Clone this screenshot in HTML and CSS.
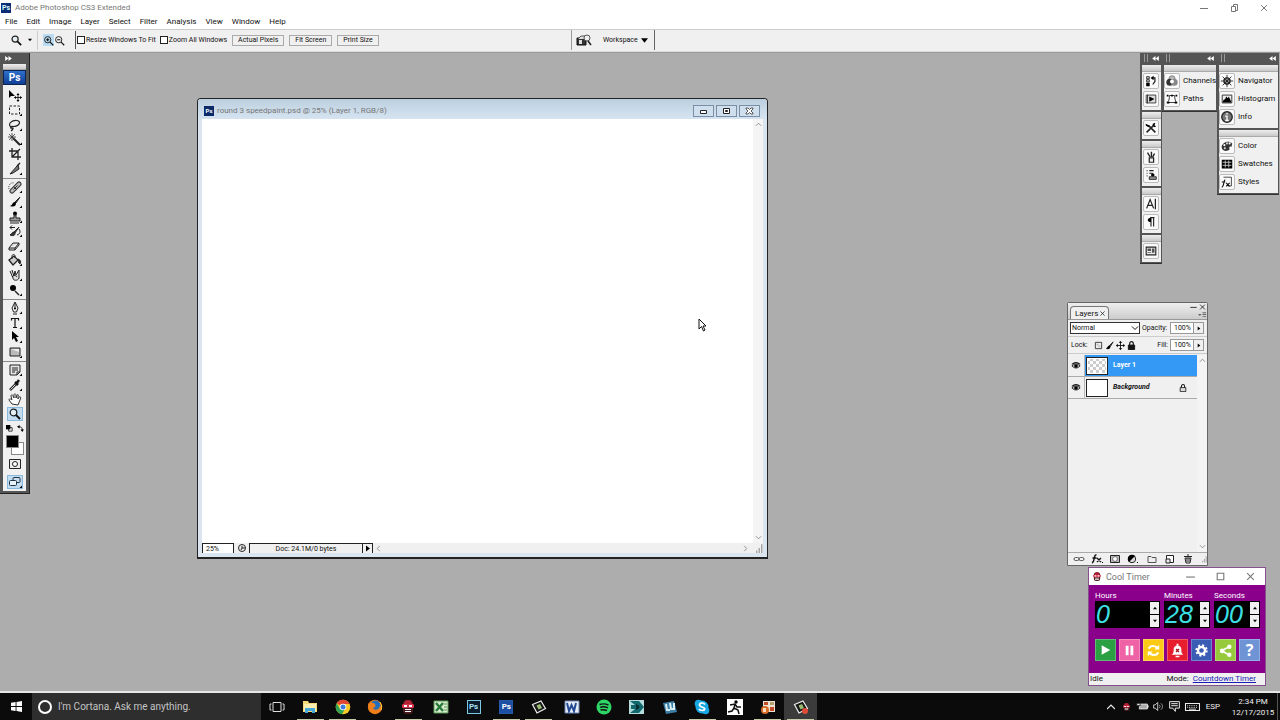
FILE: index.html
```html
<!DOCTYPE html>
<html lang="en">
<head>
<meta charset="utf-8">
<title>Adobe Photoshop CS3 Extended</title>
<link rel="stylesheet" href="styles.css">
</head>
<body>
<svg class="defs" aria-hidden="true">
  <symbol id="mag" viewBox="0 0 14 14"><circle cx="5.500" cy="5.500" r="3.300" fill="#e4eef5" stroke="#222" stroke-width="1.300"/><path d="M8 8l4 4" stroke="#111" stroke-width="2"/></symbol>
  <symbol id="magplus" viewBox="0 0 14 14"><circle cx="6" cy="6" r="4" fill="#b9dcf2" stroke="#222" stroke-width="1.200"/><path d="M6 4v4M4 6h4M9 9l4 4" stroke="#111" stroke-width="1.500"/></symbol>
  <symbol id="magminus" viewBox="0 0 14 14"><circle cx="6" cy="6" r="4" fill="#eee" stroke="#222" stroke-width="1.200"/><path d="M4 6h4M9 9l4 4" stroke="#111" stroke-width="1.500"/></symbol>
  <symbol id="tri" viewBox="0 0 6 6"><path d="M0 1h6L3 5z"/></symbol>
  <symbol id="triup" viewBox="0 0 6 6"><path d="M0 5h6L3 1z"/></symbol>
  <symbol id="triright" viewBox="0 0 6 6"><path d="M1 0v6l4-3z"/></symbol>
  <symbol id="chev" viewBox="0 0 8 8"><path d="M1 2.500l3 3 3-3" fill="none" stroke="currentColor"/></symbol>
  <symbol id="chevup" viewBox="0 0 8 8"><path d="M1 5.500l3-3 3 3" fill="none" stroke="currentColor"/></symbol>
  <symbol id="chevl" viewBox="0 0 8 8"><path d="M5.500 1l-3 3 3 3" fill="none" stroke="currentColor"/></symbol>
  <symbol id="chevr" viewBox="0 0 8 8"><path d="M2.500 1l3 3-3 3" fill="none" stroke="currentColor"/></symbol>
  <symbol id="collapse" viewBox="0 0 8 6"><path d="M4 0v6L0 3zM8 0v6L4 3z" fill="#fff"/></symbol>
  <symbol id="expand" viewBox="0 0 8 6"><path d="M0 0v6l4-3zM4 0v6l4-3z" fill="#fff"/></symbol>
  <symbol id="wmin" viewBox="0 0 10 10"><path d="M1 5.500h8" stroke="currentColor"/></symbol>
  <symbol id="wrest" viewBox="0 0 10 10"><path d="M2.500 3.500h4v5h-4zM4.500 3V1.500h4v6H7" fill="none" stroke="currentColor"/></symbol>
  <symbol id="wmax" viewBox="0 0 10 10"><path d="M2 2h6v6H2z" fill="none" stroke="currentColor"/></symbol>
  <symbol id="wx" viewBox="0 0 10 10"><path d="M2 2l6 6M8 2L2 8" stroke="currentColor" fill="none"/></symbol>
  <symbol id="corner" viewBox="0 0 16 14"><path d="M15 10.500V13h-2.500z"/></symbol>

  <symbol id="t-move" viewBox="0 0 16 14"><path d="M2 2v8l2-2 4 0z"/><path d="M11 6v7M7.500 9.500h7" stroke="#222"/><path d="M11 5l1.500 2h-3zM11 14l1.500-2h-3zM7 9.500l2-1.500v3zM15 9.500l-2-1.500v3z"/></symbol>
  <symbol id="t-marquee" viewBox="0 0 16 14"><rect x="2.500" y="3" width="10" height="8" fill="none" stroke="#222" stroke-dasharray="2.500 1.500"/><use href="#corner"/></symbol>
  <symbol id="t-lasso" viewBox="0 0 16 14"><path d="M4 9C0 6 5 2 10 2.500c5 1 2 6-4 6C3 8 3 11 5 10s1 2-1 3" fill="none" stroke="#222" stroke-width="1.200"/><use href="#corner"/></symbol>
  <symbol id="t-wand" viewBox="0 0 16 14"><path d="M6 6l7 7" stroke="#222" stroke-width="2"/><path d="M5 1v8M1 5h8M2 2l6 6M8 2L2 8" stroke="#333" stroke-width=".8"/><use href="#corner"/></symbol>
  <symbol id="t-crop" viewBox="0 0 16 14"><path d="M5 1v9h9M2 4h9v9M5 10l8-8" fill="none" stroke="#222" stroke-width="1.300"/></symbol>
  <symbol id="t-slice" viewBox="0 0 16 14"><path d="M3 12L11 3l1 4-6 4z" fill="#777" stroke="#222"/><path d="M10 4l3-3" stroke="#222" stroke-width="1.500"/><use href="#corner"/></symbol>
  <symbol id="t-heal" viewBox="0 0 16 14"><path d="M5 11L12 4" stroke="#333" stroke-width="5" stroke-linecap="round"/><path d="M5 11L12 4" stroke="#bbb" stroke-width="3" stroke-linecap="round"/><path d="M7 7l3 3M6.500 9.500l4-4" stroke="#333"/><path d="M2 9c-1-4 2-7 5-6" fill="none" stroke="#444" stroke-dasharray="1 1"/><use href="#corner"/></symbol>
  <symbol id="t-brush" viewBox="0 0 16 14"><path d="M13 2L8 7l1 1z" fill="#555" stroke="#222"/><path d="M8 7c-3 0-2 3-5 4 3 1 6 1 6-3z"/><use href="#corner"/></symbol>
  <symbol id="t-stamp" viewBox="0 0 16 14"><circle cx="8" cy="3.500" r="2"/><path d="M7 5h2v3h4v3H3V8h4z" fill="#999" stroke="#222"/><path d="M3 13h9" stroke="#222"/><use href="#corner"/></symbol>
  <symbol id="t-history" viewBox="0 0 16 14"><path d="M12 3L7 8l1 1z" fill="#555" stroke="#222"/><path d="M7 8c-2 0-2 2-4 3 3 1 5 1 5-2zM3 3.500h5M3 3.500l2-2M3 3.500l2 2" fill="#333" stroke="#222"/><path d="M12 5c2 3 1 5-2 6" fill="none" stroke="#222"/><use href="#corner"/></symbol>
  <symbol id="t-eraser" viewBox="0 0 16 14"><path d="M2 9l4-5h6L8 9zM2 9v2h6l4-5V4M8 9v2" fill="#ddd" stroke="#222"/><use href="#corner"/></symbol>
  <symbol id="t-bucket" viewBox="0 0 16 14"><path d="M2 7l5-4 4 4-5 5z" fill="#ccc" stroke="#222" stroke-width="1.300"/><path d="M5 6V3c0-2 3-2 3 0v2" fill="none" stroke="#222"/><path d="M11 6c3 1 3 3 2 5-2-1-1-3-2-5z" fill="#222" stroke="#222"/><use href="#corner"/></symbol>
  <symbol id="t-smudge" viewBox="0 0 16 14"><path d="M3 3l3 7c0 3 5 3 6 0V2L9 7 8 3 7 8 5 2" fill="#ddd" stroke="#222"/><path d="M5 9c2-2 4-2 5 0" fill="none" stroke="#222"/><use href="#corner"/></symbol>
  <symbol id="t-dodge" viewBox="0 0 16 14"><circle cx="6" cy="5" r="3"/><path d="M8 8l4 4" stroke="#222" stroke-width="1.500"/><use href="#corner"/></symbol>
  <symbol id="t-pen" viewBox="0 0 16 14"><path d="M8 1L5 7l1.500 4h3L11 7zM8 2v6M6 13h4" fill="#eee" stroke="#222"/><circle cx="8" cy="7.500" r="1"/><use href="#corner"/></symbol>
  <symbol id="t-type" viewBox="0 0 16 14"><path d="M4.500 4.500V2.500h7v2M8 2.500v9M6 11.500h4" fill="none" stroke="#111" stroke-width="1.200"/><use href="#corner"/></symbol>
  <symbol id="t-path" viewBox="0 0 16 14"><path d="M5 1v9l2-2 2 4 2-1-2-4h3z"/><use href="#corner"/></symbol>
  <symbol id="t-rect" viewBox="0 0 16 14"><path d="M3 3h10v8H3z" fill="#bbb" stroke="#222"/><path d="M4 4h8v3z" fill="#eee"/><use href="#corner"/></symbol>
  <symbol id="t-note" viewBox="0 0 16 14"><path d="M3 2h10v7l-3 3H3zM13 9h-3v3M5 5h6M5 7h6M5 9h3" fill="#e5e5e5" stroke="#222"/><use href="#corner"/></symbol>
  <symbol id="t-eye" viewBox="0 0 16 14"><path d="M3 12l6-6" stroke="#222" stroke-width="2.500"/><path d="M3.500 11.500l5-5" stroke="#ddd"/><path d="M8 4l3 3M9 6l3-4" stroke="#111" stroke-width="2.500"/><use href="#corner"/></symbol>
  <symbol id="t-hand" viewBox="0 0 16 14"><path d="M5 12L2 8c0-2 2-1 3 0L4 4c0-2 2-1 2 0l1 2V3c0-2 2-1 2 0v3l1-3c1-1 2 0 1 1v3l1-2c2-1 2 1 1 3l-2 5z" fill="#fff" stroke="#333"/></symbol>
  <symbol id="t-mask" viewBox="0 0 16 14"><path d="M2.500 2.500h11v9h-11z" fill="#eee" stroke="#222"/><circle cx="8" cy="7" r="2.500" fill="#fff" stroke="#222"/></symbol>
  <symbol id="t-screen" viewBox="0 0 16 14"><rect x="6" y="2.500" width="7" height="5" rx="1" fill="#c8ddef" stroke="#234"/><rect x="2.500" y="5.500" width="7" height="5" rx="1" fill="#e8f2fa" stroke="#234"/><use href="#corner"/></symbol>
  <symbol id="t-default" viewBox="0 0 8 8"><path d="M3 3h4v4H3z" fill="#fff" stroke="#222"/><path d="M0 0h5v5H0z"/></symbol>
  <symbol id="t-swap" viewBox="0 0 8 8"><path d="M2 2c3 0 4 1 4 4" fill="none" stroke="#111"/><path d="M0 2l3-2v4zM4 5h4L6 8z"/></symbol>

  <symbol id="p-history" viewBox="0 0 16 16"><path d="M3 3h3v2.500H3zM3 6.500h3v2.500H3z" fill="#ddd" stroke="#222"/><path d="M2.500 10h4v4h-4z"/><path d="M9 4.500h3.500v4L10 12" fill="none" stroke="#222" stroke-width="1.400"/><path d="M7.500 4.500L11 2v5z"/></symbol>
  <symbol id="p-play" viewBox="0 0 16 16"><path d="M2.500 3.500h11v9h-11zM4 3v10" fill="#ddd" stroke="#333"/><path d="M6 5v6l6-3z"/></symbol>
  <symbol id="p-tools" viewBox="0 0 16 16"><path d="M3 13L11 5M5 5l8 8" stroke="#222" stroke-width="1.800"/><path d="M2 3l4 2-1 2-3-2zM10 3l3-1-1 3 2 1-2 1-2-2z"/></symbol>
  <symbol id="p-brushes" viewBox="0 0 16 16"><path d="M6 9h5v5H6z" fill="#eee" stroke="#222" stroke-width="1.400"/><path d="M7 8L4 3M8.500 8V2M10 8l2-4" stroke="#222" stroke-width="1.600"/></symbol>
  <symbol id="p-clone" viewBox="0 0 16 16"><path d="M3 3h1M3 6h1M3 9h1M6 3h5M6 6h4" stroke="#222" stroke-width="1.400"/><circle cx="10" cy="8" r="2"/><path d="M6 10h8v3H6z" fill="#999" stroke="#222"/></symbol>
  <symbol id="p-char" viewBox="0 0 16 16"><path d="M3 13L7 3l4 10M4.500 9.500h5M13 2v12" fill="none" stroke="#222" stroke-width="1.400"/></symbol>
  <symbol id="p-para" viewBox="0 0 16 16"><path d="M8 3v10M11 3v10M12 3H7" fill="none" stroke="#222" stroke-width="1.300"/><path d="M8 3C3 3 3 8 8 8z"/></symbol>
  <symbol id="p-comps" viewBox="0 0 16 16"><path d="M2.500 3.500h11v9h-11z" fill="#eee" stroke="#222" stroke-width="1.300"/><path d="M4 5h4v3H4zM9 5h3v5H9zM4 9h4v1H4z" fill="#555"/></symbol>
  <symbol id="p-channels" viewBox="0 0 16 16"><circle cx="8" cy="5.500" r="3.500" fill="#bbb" stroke="#777"/><circle cx="5.500" cy="9.500" r="4" fill="#333"/><circle cx="10.500" cy="9.500" r="4" fill="#888"/><circle cx="8" cy="8.500" r="2.200" fill="#fff"/></symbol>
  <symbol id="p-paths" viewBox="0 0 16 16"><path d="M3 12C5 9 5 7 5 4h6c0 4 1 6 2 8z" fill="none" stroke="#222"/><path d="M2 3h2v2H2zM7 3h2v2H7zM12 3h2v2h-2zM2 11h3v2H2zM11 11h3v2h-3z"/></symbol>
  <symbol id="p-nav" viewBox="0 0 16 16"><circle cx="8" cy="8" r="3.500" fill="#ccc" stroke="#222" stroke-width="1.500"/><path d="M8 1v14M1 8h14M3 3l10 10M13 3L3 13" stroke="#222"/></symbol>
  <symbol id="p-hist" viewBox="0 0 16 16"><path d="M2.500 3.500h11v9h-11z" fill="#eee" stroke="#222"/><path d="M3 12l1-3 2-1 1-3 2 2 1-2 2 4 1 3z"/></symbol>
  <symbol id="p-info" viewBox="0 0 16 16"><circle cx="8" cy="8" r="6" fill="#777" stroke="#222" stroke-width="1.500"/><path d="M8 3v2M6 7h2v5M6 12h4" fill="none" stroke="#fff" stroke-width="1.500"/></symbol>
  <symbol id="p-color" viewBox="0 0 16 16"><path d="M13 9c-2-1-3 0-2 3-5 4-10 0-9-4s8-7 12-3z" fill="#333"/><circle cx="5" cy="7" r="1.200" fill="#fff"/><circle cx="8" cy="5" r="1.200" fill="#ccc"/><circle cx="5.500" cy="10.500" r="1.200" fill="#ddd"/><circle cx="11" cy="5" r="1.200" fill="#fff"/></symbol>
  <symbol id="p-swatch" viewBox="0 0 16 16"><path d="M2 3h12v10H2z"/><path d="M3 6h10M3 9.500h10M6 4v8M10 4v8" stroke="#ccc"/></symbol>
  <symbol id="p-styles" viewBox="0 0 16 16"><path d="M4 2.500h9v10H9" fill="none" stroke="#333"/><path d="M6 6C4 5 5 13 2 14M2 8h4M7 9l4 4M11 9l-4 4" fill="none" stroke="#111" stroke-width="1.300"/></symbol>

  <symbol id="eye" viewBox="0 0 12 12"><path d="M1 6q5-5 10 0-5 5-10 0z" fill="#ccc" stroke="#222"/><circle cx="6" cy="6" r="2.200"/><path d="M1 4q5-4 10 0" fill="none" stroke="#111" stroke-width="1.300"/></symbol>
  <symbol id="lock" viewBox="0 0 10 10"><path d="M3 5V3c0-3 4-3 4 0v2" fill="none" stroke="#111" stroke-width="1.300"/><path d="M1.500 4.500h7v5h-7z" fill="currentColor" stroke="#111"/></symbol>
  <symbol id="cross" viewBox="0 0 10 10"><path d="M5 1v8M1 5h8" stroke="#111"/><path d="M5 0l2 2H3zM5 10l2-2H3zM0 5l2-2v4zM10 5L8 3v4z"/></symbol>
  <symbol id="sq" viewBox="0 0 10 10"><path d="M1.500 1.500h7v7h-7z" fill="#eee" stroke="#333"/><path d="M3 3h2v2H3zM5 5h2v2H5z" fill="#bbb"/></symbol>
  <symbol id="l-link" viewBox="0 0 12 10"><rect x="1" y="3.500" width="5" height="3" rx="1.500" fill="none" stroke="#555"/><rect x="6" y="3.500" width="5" height="3" rx="1.500" fill="none" stroke="#555"/></symbol>
  <symbol id="l-fx" viewBox="0 0 12 10"><path d="M5.500 1C2.500 0 4 8 1 9M1.500 4h4M6 4l4 4M10 4L6 8" fill="none" stroke="#111" stroke-width="1.400"/><path d="M11 8h1v1h-1z"/></symbol>
  <symbol id="l-mask" viewBox="0 0 12 10"><path d="M1.500 1.500h9v7h-9z" fill="#bbb" stroke="#222"/><circle cx="6" cy="5" r="2.400" fill="#fff" stroke="#333" stroke-width=".6"/></symbol>
  <symbol id="l-adj" viewBox="0 0 12 10"><circle cx="5" cy="5" r="3.700" fill="#ddd" stroke="#222"/><path d="M2 8A4 4 0 018 2zM10 8h1v1h-1z"/></symbol>
  <symbol id="l-folder" viewBox="0 0 12 10"><path d="M2 8.500v-6h3l1 1h4v5z" fill="#eee" stroke="#555"/></symbol>
  <symbol id="l-new" viewBox="0 0 12 10"><path d="M2.500 1.500h7v7h-7z" fill="#fff" stroke="#222"/><path d="M2 5h4v4H2z" fill="#eee" stroke="#222"/></symbol>
  <symbol id="l-trash" viewBox="0 0 12 10"><path d="M2 2.500h8M5 1h2M3 4l1 5h4l1-5zM5 4v4M7 4v4" fill="none" stroke="#222"/></symbol>
  <symbol id="grip3" viewBox="0 0 8 8"><path d="M7 1v7M5 4v4M3 6v2" stroke="#999"/></symbol>

  <symbol id="bug" viewBox="0 0 16 16"><rect x="3" y="1" width="10" height="14" rx="4" fill="#4a1c20"/><path d="M4 5q0-4 4-4t4 4z" fill="#b52033"/><rect x="2" y="5" width="12" height="4" rx="1" fill="#d8304a"/><path d="M4 6h3v2H4zM9 6h3v2H9zM5 10h6v1H5zM5 12h6v1H5z" fill="#fff"/></symbol>
  <symbol id="win" viewBox="0 0 12 12"><path d="M0 2l5-1v4.500H0zM6 1l6-1v5.500H6zM0 6.500h5V11l-5-1zM6 6.500h6V12l-6-1z" fill="#fff"/></symbol>
  <symbol id="k-view" viewBox="0 0 16 16"><path d="M4 3.500h8v9H4zM2.500 5H1v6h1.500M13.500 5H15v6h-1.500" fill="none" stroke="#ddd"/></symbol>
  <symbol id="k-files" viewBox="0 0 16 16"><path d="M1 2h5l1 2h8v9H1z" fill="#f4d979"/><path d="M2 5h12v7H2z" fill="#fbeeb0"/><path d="M3 9h10v5h-3v-2H6v2H3z" fill="#45a9dc"/></symbol>
  <symbol id="k-chrome" viewBox="0 0 16 16"><circle cx="8" cy="8" r="7.300" fill="#f5c926"/><path d="M8 8L1.700 4.300A7.300 7.300 0 0114.500 5H8z" fill="#df4636"/><path d="M1.700 4.300A7.300 7.300 0 007 15.200L10 10H5z" fill="#2fa353"/><circle cx="8" cy="8" r="3.300" fill="#fff"/><circle cx="8" cy="8" r="2.500" fill="#3e7de0"/></symbol>
  <symbol id="k-fox" viewBox="0 0 16 16"><circle cx="8" cy="8" r="7.200" fill="#e87817"/><circle cx="8.500" cy="6.500" r="5" fill="#246eb9"/><path d="M1 5l3-3 1 2c3 0 4 2 3 4l-2 1c2 3 6 2 7-2l2 2c-2 7-11 7-13 2z" fill="#ef7f1a"/><path d="M13 3q3 4 1 8" fill="none" stroke="#f7c53a"/></symbol>
  <symbol id="k-excel" viewBox="0 0 16 16"><path d="M1 2h14v12H1z" fill="#d6ead0" stroke="#5a9a55"/><path d="M3 4l7 8M10 4l-7 8" stroke="#287a38" stroke-width="2.400"/><path d="M11 5h3M11 8h3M11 11h3" stroke="#5a9a55"/></symbol>
  <symbol id="k-flip" viewBox="0 0 16 16"><path d="M1.500 5.500L10 2l4.500 7.500L6 14z" fill="#181818" stroke="#eee" stroke-width="1.200"/><path d="M5.500 6.500L9 5l2 4-3.500 1.500z" fill="#9bbb73"/></symbol>
  <symbol id="k-flipred" viewBox="0 0 16 16"><use href="#k-flip"/><circle cx="12" cy="12" r="3" fill="#e04a38"/></symbol>
  <symbol id="k-word" viewBox="0 0 16 16"><path d="M1 2h14v12H1z" fill="#e6edf8" stroke="#7187b5"/><path d="M3 4l2 8 2.500-6L10 12l2-8" fill="none" stroke="#234a94" stroke-width="2"/></symbol>
  <symbol id="k-spot" viewBox="0 0 16 16"><circle cx="8" cy="8" r="7.500" fill="#2ed665"/><path d="M3.500 5.500q5-1.500 9 .7M4 8.300q4-1.200 8 .6M4.500 11q3-.8 6.500.5" fill="none" stroke="#111" stroke-width="1.400"/></symbol>
  <symbol id="k-max" viewBox="0 0 16 16"><path d="M0 1h15v14H0z" fill="#b4dcdc"/><path d="M1 2h9l5 6-5 6H1l5-4H2V6h4z" fill="#12686c"/><path d="M7 5q7 3 0 6z" fill="#082e32"/></symbol>
  <symbol id="k-cube" viewBox="0 0 16 16"><path d="M1 4l11-2 3 11-11 2z" fill="#3d7ea5"/><path d="M4 5l1 6h3M8 4l1 6h3V4" fill="none" stroke="#d6ecf5" stroke-width="2"/></symbol>
  <symbol id="k-skype" viewBox="0 0 16 16"><circle cx="8" cy="8" r="6.500" fill="#18a6e4"/><circle cx="4.500" cy="4.500" r="3.800" fill="#18a6e4"/><circle cx="11.500" cy="11.500" r="3.800" fill="#18a6e4"/><path d="M11 5.500C9 3 5 4 5.500 6.300S11 8 10.700 10 6 12 5 9.800" fill="none" stroke="#fff" stroke-width="1.700"/></symbol>
  <symbol id="k-run" viewBox="0 0 16 16"><path d="M0 0h16v16H0z" fill="#fff"/><circle cx="9" cy="3" r="1.700"/><path d="M3 6l5-1 2 3 4 0M8 5L7 9l4 2 1 4M7 9l-2 3-4 1" fill="none" stroke="#111" stroke-width="1.500"/></symbol>
  <symbol id="k-office" viewBox="0 0 16 16"><path d="M3 2h12v11H3z" fill="#eee4d5"/><path d="M4 3h4v3H4zM10 8h4v4h-4z" fill="#c24a28"/><path d="M10 3h4v3h-4z" fill="#b6a06d"/><circle cx="5" cy="11" r="4" fill="#d96c27"/><path d="M3 9h3v4H3z" fill="#f6dcc0"/></symbol>
  <symbol id="k-batt" viewBox="0 0 16 16"><path d="M4 5h10v6H4zM14 7h1v2h-1z" fill="#aaa" stroke="#eee"/><path d="M1 4h4v3H1zM3 7v3" fill="#eee" stroke="#111"/></symbol>
  <symbol id="k-vol" viewBox="0 0 16 16"><path d="M2 6h2l3-3v10l-3-3H2z" fill="none" stroke="#eee"/><path d="M9 6q2 2 0 4M11 4q4 4 0 8" fill="none" stroke="#aaa"/></symbol>
  <symbol id="k-note" viewBox="0 0 16 16"><path d="M2 2h12v8H9v4l-3-4H2zM4 4.500h8M4 7h8" fill="none" stroke="#eee" stroke-width="1.200"/></symbol>
  <symbol id="k-keys" viewBox="0 0 18 16"><path d="M1 4h16v8H1z" fill="none" stroke="#eee" stroke-width="1.200"/><path d="M3 6.500h12M3 8.500h12" stroke="#eee" stroke-dasharray="1 1"/><path d="M5 10.500h8" stroke="#eee"/></symbol>

  <symbol id="c-play" viewBox="0 0 20 20"><path d="M6 4.500v10l9-5z" fill="#fff"/></symbol>
  <symbol id="c-pause" viewBox="0 0 20 20"><path d="M6 5h3v10H6zM11 5h3v10h-3z" fill="#fff"/></symbol>
  <symbol id="c-loop" viewBox="0 0 20 20"><path d="M5 8c2-4 6-3 9-1M15 12c-2 4-6 3-9 1" fill="none" stroke="#fff" stroke-width="2.200"/><path d="M16 4v5h-5zM4 16v-5h5z" fill="#fff"/></symbol>
  <symbol id="c-bell" viewBox="0 0 20 20"><path d="M4 14.500c2-2 2-3 2-6 0-5 8-5 8 0 0 3 0 4 2 6z" fill="#fff"/><path d="M9 3h2v2H9zM8 15.500h4v1.500H8z" fill="#fff"/><path d="M8.500 8.500l3 3M11.500 8.500l-3 3" stroke="#a01522" stroke-width="1.400"/></symbol>
  <symbol id="c-gear" viewBox="0 0 20 20"><circle cx="10" cy="10" r="3.700" fill="none" stroke="#fff" stroke-width="2.500"/><circle cx="10" cy="10" r="5.500" fill="none" stroke="#fff" stroke-width="2" stroke-dasharray="2.160"/></symbol>
  <symbol id="c-share" viewBox="0 0 20 20"><path d="M14 6L6 10l8 5" fill="none" stroke="#fff" stroke-width="1.700"/><circle cx="14" cy="6" r="2.300" fill="#fff"/><circle cx="6.500" cy="10.500" r="2.500" fill="#fff"/><circle cx="14" cy="14.500" r="2.300" fill="#fff"/></symbol>
  <symbol id="camera" viewBox="0 0 18 14"><path d="M2 5h9v7H2z" fill="#333" stroke="#111"/><path d="M3 6l3-3h5l2 3" fill="#ddd" stroke="#555"/><circle cx="12" cy="5" r="3" fill="#eee" stroke="#555"/><path d="M4 7h3v4H4z" fill="#ddd"/><path d="M13 8l3 4" stroke="#222" stroke-width="1.600"/></symbol>
</svg>

<header class="titlebar">
  <span class="ps-logo">Ps</span>
  <span class="app-title">Adobe Photoshop CS3 Extended</span>
  <div class="win-controls">
    <button aria-label="Minimize"><svg><use href="#wmin"/></svg></button>
    <button aria-label="Restore"><svg><use href="#wrest"/></svg></button>
    <button aria-label="Close"><svg><use href="#wx"/></svg></button>
  </div>
</header>
<nav class="menubar">
  <button>File</button><button>Edit</button><button>Image</button><button>Layer</button><button>Select</button><button>Filter</button><button>Analysis</button><button>View</button><button>Window</button><button>Help</button>
</nav>
<div class="options">
  <div class="opt-main">
    <button class="opt-tool" aria-label="Zoom tool"><svg class="i14"><use href="#mag"/></svg><svg class="i4"><use href="#tri"/></svg></button>
    <div class="opt-zoom">
      <button class="on" aria-label="Zoom in"><svg><use href="#magplus"/></svg></button>
      <button aria-label="Zoom out"><svg><use href="#magminus"/></svg></button>
    </div>
    <div class="opt-checks">
      <label><input type="checkbox">Resize Windows To Fit</label>
      <label><input type="checkbox">Zoom All Windows</label>
    </div>
    <div class="opt-buttons"><button>Actual Pixels</button><button>Fit Screen</button><button>Print Size</button></div>
  </div>
  <div class="opt-work">
    <button aria-label="Go to Bridge"><svg class="camera"><use href="#camera"/></svg></button>
    <button class="workspace-btn">Workspace <svg class="i7"><use href="#tri"/></svg></button>
  </div>
</div>

<main class="desktop">
  <aside class="toolbox">
    <button class="dock-head" aria-label="Expand toolbox"><svg><use href="#expand"/></svg></button>
    <div class="tool-body">
      <div class="grip"></div>
      <div class="ps-banner">Ps</div>
      <div class="tools six">
        <button aria-label="Move"><svg><use href="#t-move"/></svg></button>
        <button aria-label="Marquee"><svg><use href="#t-marquee"/></svg></button>
        <button aria-label="Lasso"><svg><use href="#t-lasso"/></svg></button>
        <button aria-label="Magic wand"><svg><use href="#t-wand"/></svg></button>
        <button aria-label="Crop"><svg><use href="#t-crop"/></svg></button>
        <button aria-label="Slice"><svg><use href="#t-slice"/></svg></button>
      </div>
      <div class="tools eight">
        <button aria-label="Healing brush"><svg><use href="#t-heal"/></svg></button>
        <button aria-label="Brush"><svg><use href="#t-brush"/></svg></button>
        <button aria-label="Clone stamp"><svg><use href="#t-stamp"/></svg></button>
        <button aria-label="History brush"><svg><use href="#t-history"/></svg></button>
        <button aria-label="Eraser"><svg><use href="#t-eraser"/></svg></button>
        <button aria-label="Paint bucket"><svg><use href="#t-bucket"/></svg></button>
        <button aria-label="Smudge"><svg><use href="#t-smudge"/></svg></button>
        <button aria-label="Dodge"><svg><use href="#t-dodge"/></svg></button>
      </div>
      <div class="tools four">
        <button aria-label="Pen"><svg><use href="#t-pen"/></svg></button>
        <button aria-label="Type"><svg><use href="#t-type"/></svg></button>
        <button aria-label="Path selection"><svg><use href="#t-path"/></svg></button>
        <button aria-label="Rectangle"><svg><use href="#t-rect"/></svg></button>
      </div>
      <div class="tools four">
        <button aria-label="Notes"><svg><use href="#t-note"/></svg></button>
        <button aria-label="Eyedropper"><svg><use href="#t-eye"/></svg></button>
        <button aria-label="Hand"><svg><use href="#t-hand"/></svg></button>
        <button class="on" aria-label="Zoom"><svg><use href="#mag"/></svg></button>
      </div>
      <div class="swap-row">
        <button aria-label="Default colors"><svg><use href="#t-default"/></svg></button>
        <button aria-label="Swap colors"><svg><use href="#t-swap"/></svg></button>
      </div>
      <div class="swatches"><button class="bg" aria-label="Background color"></button><button class="fg" aria-label="Foreground color"></button></div>
      <div class="modes">
        <button aria-label="Quick mask"><svg><use href="#t-mask"/></svg></button>
        <button class="on" aria-label="Screen mode"><svg><use href="#t-screen"/></svg></button>
      </div>
    </div>
  </aside>

  <section class="document">
    <div class="doc-title">
      <span class="doc-logo">Ps</span>
      <span class="doc-name">round 3 speedpaint.psd @ 25% (Layer 1, RGB/8)</span>
      <button aria-label="Minimize"><svg viewBox="0 0 12 10"><path d="M2.500 4.500h6v3h-6z" fill="#fff" stroke="#222"/></svg></button>
      <button aria-label="Maximize"><svg viewBox="0 0 12 10"><path d="M2.500 2.500h6v5h-6zM4.500 4.500h2v1h-2z" fill="#fff" stroke="#222"/></svg></button>
      <button aria-label="Close"><svg viewBox="0 0 12 10"><path d="M2 2h2l1.500 1.500L7 2h2v1L7 5l2 2v1H7L5.500 6.500 4 8H2V7l2-2-2-2z" fill="#fff" stroke="#333" stroke-width=".8"/></svg></button>
    </div>
    <div class="doc-body">
      <div class="canvas"></div>
      <div class="vscroll"><svg><use href="#chevup"/></svg><svg><use href="#chev"/></svg></div>
    </div>
    <div class="doc-status">
      <input class="zoom-level" value="25%" aria-label="Zoom level">
      <button class="cue" aria-label="Version Cue"><svg viewBox="0 0 10 10"><circle cx="5" cy="5" r="3.500" fill="#eee" stroke="#222"/><path d="M5 3v2h3M5 5l-1 2" fill="none" stroke="#222"/></svg></button>
      <span class="doc-size">Doc: 24.1M/0 bytes</span>
      <button class="more" aria-label="Status menu"><svg><use href="#triright"/></svg></button>
      <div class="hscroll"><svg><use href="#chevl"/></svg><svg><use href="#chevr"/></svg></div>
      <svg class="resize"><use href="#grip3"/></svg>
    </div>
  </section>

  <svg class="cursor" viewBox="0 0 9 14"><path d="M1 1v10l2.500-2.500L5.500 13l1.500-1-2-4h3z" fill="#fff" stroke="#111"/></svg>

  <aside class="dock">
    <div class="dock-col narrow">
      <div class="dock-head"><i></i><svg><use href="#collapse"/></svg></div>
      <div class="dock-group"><div class="grip"></div><button aria-label="History"><svg><use href="#p-history"/></svg></button><button aria-label="Actions"><svg><use href="#p-play"/></svg></button></div>
      <div class="dock-group"><div class="grip"></div><button aria-label="Tool presets"><svg><use href="#p-tools"/></svg></button></div>
      <div class="dock-group"><div class="grip"></div><button aria-label="Brushes"><svg><use href="#p-brushes"/></svg></button><button aria-label="Clone source"><svg><use href="#p-clone"/></svg></button></div>
      <div class="dock-group"><div class="grip"></div><button aria-label="Character"><svg><use href="#p-char"/></svg></button><button aria-label="Paragraph"><svg><use href="#p-para"/></svg></button></div>
      <div class="dock-group"><div class="grip"></div><button aria-label="Layer comps"><svg><use href="#p-comps"/></svg></button></div>
    </div>
    <div class="dock-col mid">
      <div class="dock-head"><i></i><svg><use href="#collapse"/></svg></div>
      <div class="dock-group"><div class="grip"></div><button><svg><use href="#p-channels"/></svg>Channels</button><button><svg><use href="#p-paths"/></svg>Paths</button></div>
    </div>
    <div class="dock-col wide">
      <div class="dock-head"><i></i><svg><use href="#collapse"/></svg></div>
      <div class="dock-group"><div class="grip"></div><button><svg><use href="#p-nav"/></svg>Navigator</button><button><svg><use href="#p-hist"/></svg>Histogram</button><button><svg><use href="#p-info"/></svg>Info</button></div>
      <div class="dock-group"><div class="grip"></div><button><svg><use href="#p-color"/></svg>Color</button><button><svg><use href="#p-swatch"/></svg>Swatches</button><button><svg><use href="#p-styles"/></svg>Styles</button></div>
    </div>
  </aside>

  <section class="layers">
    <div class="layers-head">
      <div class="tab">Layers <svg><use href="#wx"/></svg></div>
      <div class="panel-controls"><div><button aria-label="Minimize panel"><svg><use href="#wmin"/></svg></button><button aria-label="Close panel"><svg><use href="#wx"/></svg></button></div><button aria-label="Panel menu"><svg viewBox="0 0 10 8"><path d="M0 3h4L2 5zM5 1h4v1H5zM5 3h4v1H5zM5 5h4v1H5z" fill="#666"/></svg></button></div>
    </div>
    <div class="layer-opts">
      <div class="blend"><select aria-label="Blend mode"><option>Normal</option></select><svg><use href="#chev"/></svg></div>
      <label for="opacity">Opacity:</label><input id="opacity" value="100%"><button aria-label="Opacity slider"><svg><use href="#triright"/></svg></button>
    </div>
    <div class="layer-opts locks">
      <span>Lock:</span>
      <button aria-label="Lock transparency"><svg><use href="#sq"/></svg></button><button aria-label="Lock pixels"><svg viewBox="0 0 10 10"><path d="M9 1L5 5l1 1z" fill="#555" stroke="#222"/><path d="M5 5c-2 0-2 3-4 3 2 2 5 1 5-2z"/></svg></button><button aria-label="Lock position"><svg><use href="#cross"/></svg></button><button aria-label="Lock all"><svg><use href="#lock"/></svg></button>
      <label for="fill">Fill:</label><input id="fill" value="100%"><button aria-label="Fill slider"><svg><use href="#triright"/></svg></button>
    </div>
    <div class="layer-area">
      <div class="layer-list">
        <div class="layer selected"><button aria-label="Toggle Layer 1"><svg><use href="#eye"/></svg></button><div class="thumb checker"></div><span>Layer 1</span></div>
        <div class="layer"><button aria-label="Toggle Background"><svg><use href="#eye"/></svg></button><div class="thumb"></div><span class="it">Background</span><svg class="locked"><use href="#lock"/></svg></div>
      </div>
      <div class="vscroll"><svg><use href="#chevup"/></svg><svg><use href="#chev"/></svg></div>
    </div>
    <div class="layer-foot">
      <button aria-label="Link"><svg><use href="#l-link"/></svg></button><button aria-label="Layer style"><svg><use href="#l-fx"/></svg></button><button aria-label="Mask"><svg><use href="#l-mask"/></svg></button><button aria-label="Adjustment"><svg><use href="#l-adj"/></svg></button><button aria-label="Group"><svg><use href="#l-folder"/></svg></button><button aria-label="New layer"><svg><use href="#l-new"/></svg></button><button aria-label="Delete"><svg><use href="#l-trash"/></svg></button><svg class="resize"><use href="#grip3"/></svg>
    </div>
  </section>

  <section class="timer">
    <div class="timer-title">
      <svg><use href="#bug"/></svg><span>Cool Timer</span>
      <button aria-label="Minimize"><svg><use href="#wmin"/></svg></button><button aria-label="Maximize"><svg><use href="#wmax"/></svg></button><button aria-label="Close"><svg><use href="#wx"/></svg></button>
    </div>
    <div class="timer-body">
      <div class="clocks">
        <div class="clock hours"><label for="h">Hours</label><div class="lcd"><input id="h" value="0"><div class="spin"><button aria-label="More hours"><svg><use href="#triup"/></svg></button><button aria-label="Fewer hours"><svg><use href="#tri"/></svg></button></div></div></div>
        <div class="clock"><label for="m">Minutes</label><div class="lcd"><input id="m" value="28"><div class="spin"><button aria-label="More minutes"><svg><use href="#triup"/></svg></button><button aria-label="Fewer minutes"><svg><use href="#tri"/></svg></button></div></div></div>
        <div class="clock"><label for="s">Seconds</label><div class="lcd"><input id="s" value="00"><div class="spin"><button aria-label="More seconds"><svg><use href="#triup"/></svg></button><button aria-label="Fewer seconds"><svg><use href="#tri"/></svg></button></div></div></div>
      </div>
      <div class="actions">
        <button class="green" aria-label="Start"><svg><use href="#c-play"/></svg></button>
        <button class="pink" aria-label="Pause"><svg><use href="#c-pause"/></svg></button>
        <button class="yellow" aria-label="Reset"><svg><use href="#c-loop"/></svg></button>
        <button class="red" aria-label="Alarm"><svg><use href="#c-bell"/></svg></button>
        <button class="blue" aria-label="Options"><svg><use href="#c-gear"/></svg></button>
        <button class="lime" aria-label="Share"><svg><use href="#c-share"/></svg></button>
        <button class="sky" aria-label="Help">?</button>
      </div>
    </div>
    <div class="timer-foot"><span>Idle</span><span>Mode:</span><a href="#">Countdown Timer</a></div>
  </section>
</main>

<footer class="taskbar">
  <button class="start" aria-label="Start"><svg><use href="#win"/></svg></button>
  <label class="cortana"><i></i><input placeholder="I'm Cortana. Ask me anything." aria-label="Search"></label>
  <div class="apps">
    <button aria-label="Task view"><svg><use href="#k-view"/></svg></button>
    <button class="run" aria-label="File Explorer"><svg><use href="#k-files"/></svg></button>
    <button class="run" aria-label="Chrome"><svg><use href="#k-chrome"/></svg></button>
    <button aria-label="Firefox"><svg><use href="#k-fox"/></svg></button>
    <button class="run" aria-label="Cool Timer"><svg><use href="#bug"/></svg></button>
    <button aria-label="Excel"><svg><use href="#k-excel"/></svg></button>
    <button><span class="ps-dark">Ps</span></button>
    <button class="run"><span class="ps-blue">Ps</span></button>
    <button class="run" aria-label="Recorder"><svg><use href="#k-flip"/></svg></button>
    <button aria-label="Word"><svg><use href="#k-word"/></svg></button>
    <button aria-label="Spotify"><svg><use href="#k-spot"/></svg></button>
    <button aria-label="3ds Max"><svg><use href="#k-max"/></svg></button>
    <button aria-label="Mudbox"><svg><use href="#k-cube"/></svg></button>
    <button class="run" aria-label="Skype"><svg><use href="#k-skype"/></svg></button>
    <button aria-label="ZBrush"><svg><use href="#k-run"/></svg></button>
    <button class="run" aria-label="Office"><svg><use href="#k-office"/></svg></button>
    <button class="run active" aria-label="Recording"><svg><use href="#k-flipred"/></svg></button>
  </div>
  <div class="tray">
    <svg class="up" viewBox="0 0 8 8"><path d="M0 6l4-4 4 4" fill="none" stroke="#eee" stroke-width="1.200"/></svg>
    <svg class="bugs"><use href="#bug"/></svg><svg><use href="#k-batt"/></svg><svg><use href="#k-vol"/></svg><svg><use href="#k-note"/></svg><svg class="keys"><use href="#k-keys"/></svg>
    <span class="lang">ESP</span>
    <time><span>2:34 PM</span><span>12/17/2015</span></time>
    <span class="peek"></span>
  </div>
</footer>
</body>
</html>
```

FILE: styles.css
```css
* { box-sizing: border-box; }
body { margin: 0; height: 100vh; display: flex; flex-direction: column; overflow: hidden; background: #fff; color: #111; font: 8px/10px Roboto, "Noto Sans", sans-serif; }
button { margin: 0; padding: 0; border: 0; background: none; color: inherit; font: inherit; display: flex; align-items: center; justify-content: center; flex: none; }
input, select { margin: 0; padding: 0; border: 0; font: inherit; color: inherit; min-width: 0; border-radius: 0; outline: 0; }
svg { display: block; flex: none; }
.defs { position: absolute; width: 0; height: 0; }

.titlebar { display: flex; align-items: center; height: 15px; flex: none; }
.ps-logo { width: 10px; height: 10px; margin: 0 4px 0 1px; background: #0b2d75; color: #dff; font-size: 7px; font-weight: 700; text-align: center; }
.app-title { color: #777; flex: 1; }
.win-controls { display: flex; gap: 10px; padding-right: 6px; color: #777; }
.win-controls button { width: 20px; height: 14px; }
.win-controls svg { width: 10px; height: 10px; }

.menubar { display: flex; gap: 9px; height: 14px; padding-left: 5px; flex: none; }
.options { display: flex; height: 23px; flex: none; padding-bottom: 1px; background: #f0f0f0; border-top: 1px solid #ccc; border-bottom: 1px solid #ddd; font-size: 7px; }
.opt-main { display: flex; align-items: center; flex: 0 1 572px; border-right: 1px solid #999; }
.opt-tool { gap: 5px; width: 38px; padding-left: 4px; height: 19px; border-right: 1px solid #ccc; }
.i14 { width: 13px; height: 13px; }
.i4 { width: 4px; height: 4px; }
.i7 { width: 7px; height: 7px; }
.opt-zoom { display: flex; width: 38px; padding-left: 5px; margin-right: 1px; border-right: 1px solid #555; height: 18px; align-items: center; }
.opt-zoom button { width: 11px; height: 12px; }
.opt-zoom .on { background: #b9dcf2; }
.opt-zoom svg { width: 11px; height: 11px; }
.opt-checks { display: flex; gap: 4px; }
.opt-checks label { display: flex; align-items: center; gap: 1px; }
.opt-checks input { appearance: none; width: 8px; height: 8px; border: 1px solid #222; background: #fff; }
.opt-buttons { display: flex; gap: 5px; margin-left: 5px; }
.opt-buttons button { height: 11px; padding: 0 5px; border: 1px solid #aaa; }
.opt-work { display: flex; align-items: center; gap: 10px; padding: 0 6px 0 3px; border-right: 1px solid #666; }
.workspace-btn { gap: 3px; }
.camera { width: 18px; height: 14px; }

.desktop { position: relative; flex: 1; min-height: 0; background: #adadad; border-top: 1px solid #999; border-bottom: 2px solid #e6e6e6; }
.grip { height: 6px; background: linear-gradient(#eee, #c9c9c9); border-bottom: 1px solid #aaa; }
.toolbox { position: absolute; left: 0; top: 0; width: 30px; padding: 0 3px 2px; background: #555; border-right: 1px solid #222; border-bottom: 1px solid #222; }
.dock-head { display: flex; align-items: center; justify-content: space-between; height: 11px; padding: 0 2px; }
.dock-head svg { width: 7px; height: 5px; }
.dock-head i { width: 4px; height: 8px; border: 1px solid #999; border-width: 0 1px; }
.tool-body { background: #f0f0f0; padding-bottom: 2px; }
.ps-banner { height: 15px; margin-bottom: 3px; background: linear-gradient(#2d70cc, #123e96); border: 1px solid #0b2550; color: #fff; text-align: center; font-size: 10px; line-height: 13px; font-weight: 700; }
.tools { display: flex; flex-direction: column; align-items: center; }
.tools + .tools { border-top: 1px solid #888; margin-top: 2px; padding-top: 1px; }
.tools button, .modes button { flex: 1; width: 16px; }
.tools svg, .modes svg { width: 16px; height: 14px; }
.six { height: 88px; }
.eight { height: 119px; }
.four { height: 60px; }
.tools .on, .modes .on { background: #c2ddf2; outline: 1px solid #8ab8da; outline-offset: -1px; }
.swap-row { display: flex; justify-content: center; gap: 4px; margin-top: 2px; height: 11px; align-items: center; }
.swap-row svg { width: 7px; height: 7px; }
.swatches { position: relative; height: 23px; }
.swatches button { position: absolute; width: 13px; height: 13px; border: 1px solid #888; }
.swatches .fg { left: 3px; top: 1px; background: #000; }
.swatches .bg { right: 2px; bottom: 2px; background: #fff; }
.modes { display: flex; flex-direction: column; align-items: center; gap: 3px; height: 32px; }

.document { position: absolute; left: 197px; top: 45px; width: 571px; height: 461px; display: flex; flex-direction: column; padding: 0 4px 4px; border: 1px solid #222; border-bottom-width: 2px; border-radius: 4px 4px 0 0; background: #dae5ef; }
.doc-title { display: flex; align-items: center; gap: 1px; height: 20px; flex: none; margin: 0 -4px; padding: 3px 7px 0 6px; background: linear-gradient(#bccfdf, #d6e4f1); border-radius: 3px 3px 0 0; color: #777; }
.doc-title button { width: 21px; height: 12px; margin-left: 1px; border: 1px solid #7a8ea5; background: #d0dfed; }
.doc-title button svg { width: 12px; height: 10px; }
.doc-logo { width: 10px; height: 10px; background: #0a2a68; color: #fff; font-size: 6px; text-align: center; font-weight: 700; margin-right: 2px; }
.doc-name { flex: 1; }
.doc-body { flex: 1; display: flex; background: #fff; min-height: 0; }
.canvas { flex: 1; }
.vscroll { width: 10px; display: flex; flex-direction: column; justify-content: space-between; align-items: center; background: #f4f4f4; color: #888; padding: 2px 0; }
.vscroll svg, .hscroll svg { width: 7px; height: 7px; }
.doc-status { display: flex; height: 10px; flex: none; background: #f0f0f0; font-size: 7px; }
.zoom-level { width: 32px; background: #fff; border: 1px solid #222; border-width: 1px 1px 0; padding-left: 3px; }
.cue { width: 16px; border: 1px solid #222; border-width: 0 1px 0 0; }
.cue svg { width: 10px; height: 10px; }
.doc-size { width: 112px; text-align: center; border-top: 1px solid #222; }
.more { width: 11px; border: 1px solid #222; border-bottom: 0; }
.more svg { width: 6px; height: 7px; }
.hscroll { flex: 1; display: flex; justify-content: space-between; align-items: center; padding: 0 4px 0 2px; color: #888; }
.resize { width: 10px; height: 10px; }
.cursor { position: absolute; left: 698px; top: 265px; width: 9px; height: 14px; }

.dock { position: absolute; right: 1px; top: 0; display: flex; align-items: flex-start; }
.dock-col { background: #555; display: flex; flex-direction: column; gap: 2px; padding: 0 1px 1px 2px; border-bottom: 1px solid #333; }
.dock-col .dock-head { height: 10px; }
.narrow { width: 22px; }
.mid { width: 55px; }
.wide { width: 62px; }
.dock-group { background: #f0f0f0; padding-bottom: 2px; }
.dock-group .grip { height: 7px; }
.dock-group button { height: 18px; gap: 3px; }
.narrow button { padding-left: 1px; }
.dock-group button svg { width: 16px; height: 16px; border: 1px solid #bbb; border-radius: 2px; background: #fafafa; }

.layers { position: absolute; right: 72px; top: 249px; width: 141px; height: 264px; display: flex; flex-direction: column; background: #f0f0f0; border: 1px solid #666; border-radius: 2px 2px 0 0; font-size: 7px; line-height: 9px; }
.layers-head { display: flex; justify-content: space-between; align-items: flex-end; height: 17px; flex: none; background: linear-gradient(#eee, #ccc); border-bottom: 1px solid #999; }
.tab { display: flex; align-items: center; gap: 1px; height: 13px; margin-left: 2px; padding: 0 2px 0 4px; border: 1px solid #777; border-bottom: 0; border-radius: 4px 4px 0 0; background: #f0f0f0; font-size: 8px; }
.tab svg { width: 7px; height: 7px; }
.panel-controls { display: flex; flex-direction: column; align-items: flex-end; height: 16px; }
.panel-controls div { display: flex; }
.panel-controls svg { width: 9px; height: 8px; }
.layer-opts { display: flex; align-items: center; height: 17px; flex: none; padding: 0 3px 0 2px; border-bottom: 1px solid #ccc; }
.blend { position: relative; width: 70px; margin-right: 2px; }
.blend select { appearance: none; width: 100%; height: 12px; border: 1px solid #333; background: #fff; padding-left: 1px; display: block; }
.blend svg { position: absolute; right: 1px; top: 2px; width: 8px; height: 8px; }
.layer-opts label { flex: 1; }
.layer-opts > input { width: 24px; height: 12px; border: 1px solid #999; background: #fff; padding-left: 3px; }
.layer-opts > input + button { width: 10px; height: 12px; border: 1px solid #999; border-left: 0; }
.layer-opts > input + button svg { width: 4px; height: 5px; }
.locks { gap: 2px; padding-left: 3px; }
.locks button svg { width: 9px; height: 9px; }
.locks label { text-align: right; }
.locks input + button { margin-left: -2px; }
.locks > span { margin-right: 4px; }
.layer-area { display: flex; flex: 1; min-height: 0; margin-top: 1px; }
.layer-list { flex: 1; }
.layer { display: flex; align-items: center; height: 22px; border-bottom: 1px solid #aaa; padding-right: 10px; }
.layer button { width: 17px; height: 21px; background: #f0f0f0; border-right: 1px solid #bbb; }
.layer button svg { width: 10px; height: 10px; }
.layer span { flex: 1; margin-left: 5px; font-weight: 700; }
.layer .it { font-style: italic; }
.selected { background: #3399f5; color: #fff; }
.selected button { color: #111; }
.thumb { width: 22px; height: 18px; margin-left: 1px; background: #fff; border: 1px solid #222; }
.checker { background: repeating-conic-gradient(#ccc 0 25%, #fff 0 50%) 0 0 / 6px 6px; outline: 1px solid #fff; outline-offset: -2px; }
.locked { width: 8px; height: 8px; color: #ddd; }
.layer-foot { display: flex; align-items: center; justify-content: space-between; height: 13px; flex: none; border-top: 1px solid #aaa; padding-left: 5px; }
.layer-foot button svg { width: 12px; height: 10px; }
.layer-foot .resize { width: 7px; height: 8px; }

.timer { position: absolute; right: 14px; top: 514px; width: 178px; height: 119px; display: flex; flex-direction: column; border: 1px solid #86508c; background: #8b008b; }
.timer-title { display: flex; align-items: center; height: 17px; flex: none; background: #fff; color: #777; padding-left: 3px; }
.timer-title > svg { width: 10px; height: 11px; margin-right: 4px; }
.timer-title span { flex: 1; font-size: 9px; }
.timer-title button { width: 30px; }
.timer-title button svg { width: 11px; height: 11px; }
.timer-body { flex: 1; padding: 6px 5px 0 6px; }
.clocks { display: flex; gap: 4px; color: #fff; }
.clock { flex: 0 0 46px; }
.clock.hours { flex: 1; }
.clock label { display: block; }
.lcd { display: flex; height: 27px; background: #000; }
.lcd input { flex: 1; width: 0; padding-left: 1px; background: #000; color: #3de0e4; font: italic 25px/27px "Liberation Sans", Arial, sans-serif; }
.spin { display: flex; flex-direction: column; width: 11px; padding: 1px; gap: 1px; color: #111; }
.spin button { flex: 1; background: #f0f0f0; }
.spin svg { width: 4px; height: 4px; }
.actions { display: flex; justify-content: space-between; margin-top: 11px; }
.actions button { width: 21px; height: 22px; border: 1px solid #ffffff44; color: #fff; font: 700 16px/20px "Open Sans", sans-serif; }
.actions svg { width: 19px; height: 19px; }
.green { background: #2aa043; }
.pink { background: #ef62a6; }
.yellow { background: #fbc916; }
.red { background: #e61e2e; }
.blue { background: #3a5cb4; }
.lime { background: #96ca3c; }
.sky { background: #6e94d6; }
.timer-foot { display: flex; gap: 4px; height: 12px; flex: none; padding: 0 9px 0 1px; background: #f0f0f0; line-height: 12px; }
.timer-foot span:first-child { flex: 1; }
.timer-foot a { color: #1a1ab4; }

.taskbar { display: flex; height: 27px; flex: none; background: #0b0b0b; color: #eee; }
.start { width: 32px; }
.start svg { width: 11px; height: 11px; }
.cortana { flex: 0 1 229px; display: flex; align-items: center; gap: 6px; padding-left: 6px; background: #2e2e2e; }
.cortana i { width: 14px; height: 14px; border: 2px solid #fff; border-radius: 50%; flex: none; }
.cortana input { flex: 1; background: none; font-size: 10px; }
.cortana input::placeholder { color: #c4c4c4; opacity: 1; }
.apps { display: flex; flex: 0 1 556px; }
.apps button { flex: 1; }
.apps svg { width: 16px; height: 16px; }
.apps .run { background: linear-gradient(#c8cba8, #c8cba8) center bottom / 27px 1px no-repeat; }
.apps .active { background-color: #3b3b3b; }
.ps-dark, .ps-blue { width: 14px; height: 14px; font-size: 8px; line-height: 12px; font-weight: 700; border: 1px solid #7cc7e2; background: #0b1d2d; color: #a9e2f5; }
.ps-blue { border-color: #2459a8; background: #1d4fa3; color: #fff; }
.tray { display: flex; align-items: center; gap: 3px; margin-left: auto; line-height: 11px; }
.tray svg { width: 13px; height: 13px; }
.tray .up { width: 8px; height: 8px; margin-right: 4px; }
.tray .bugs { width: 9px; height: 10px; margin-right: 2px; }
.tray .keys { width: 17px; height: 14px; }
.lang { margin: 0 9px 0 2px; }
.tray time { display: flex; flex-direction: column; width: 42px; align-items: center; }
.peek { width: 3px; height: 27px; border-left: 1px solid #555; }
```
